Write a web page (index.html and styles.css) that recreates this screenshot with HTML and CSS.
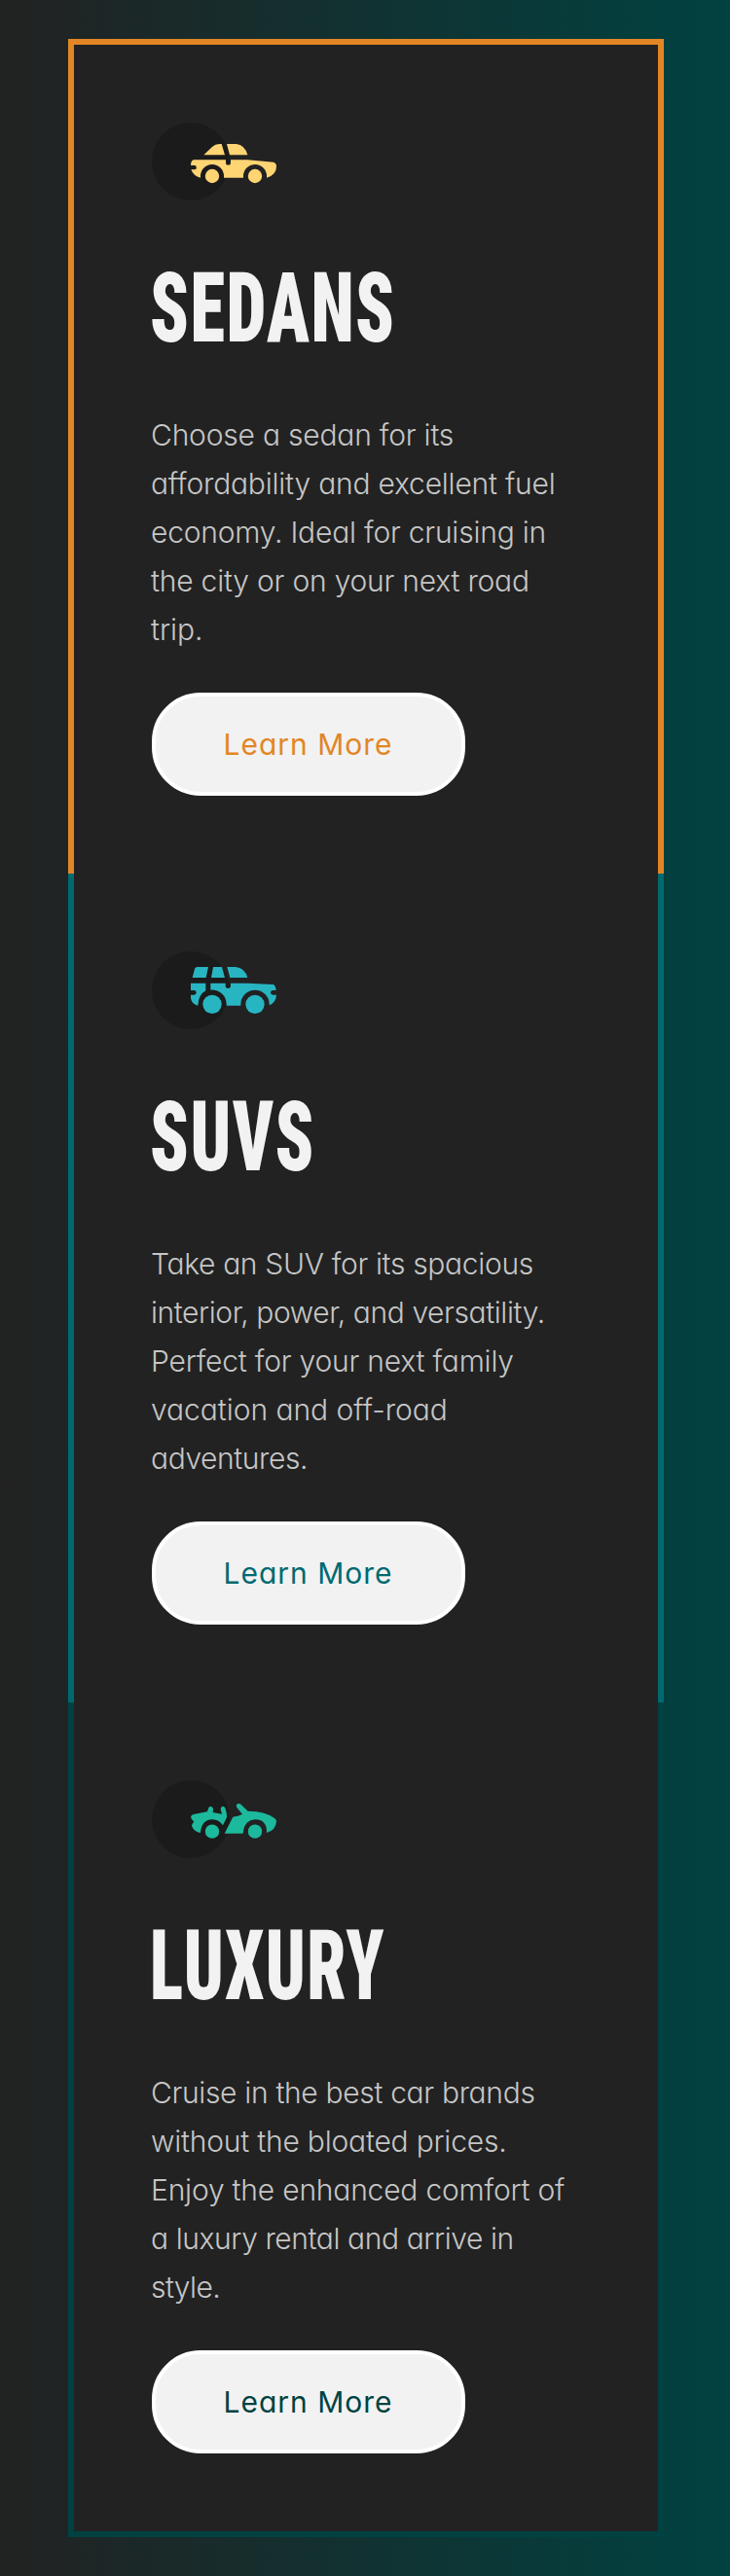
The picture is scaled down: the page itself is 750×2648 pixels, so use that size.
FILE: index.html
```
<!DOCTYPE html>
<html lang="en">
<head>
<meta charset="utf-8">
<title>Car categories</title>
<link rel="stylesheet" href="styles.css">
</head>
<body>
<main class="cards">
  <section class="card card-sedans">
    <svg class="icon" viewBox="318 318 504 240" aria-hidden="true">
      <circle class="disc" cx="438" cy="438" r="120"/>
      <path d="M478 418L504 393Q513 384 526 384H533L543 418ZM549 384H578Q605 387 613 418H558Z"/>
      <path d="M449 433H546V442a7.500 7.500 0 0 0 15 0V433H613L693 440Q702 443 702 453Q702 480 672 488V483A36 36 0 0 0 600 483V488H540V483A36 36 0 0 0 468 483V488Q446 483 439 463H449a6.500 6.500 0 0 0 0-13H438Q438 433 449 433Z"/>
      <circle cx="504" cy="483" r="21.500"/><circle cx="636" cy="483" r="21.500"/>
    </svg>
    <h2 class="title">SEDANS</h2>
    <p class="text">
      <span class="line">Choose a sedan for its</span>
      <span class="line">affordability and excellent fuel</span>
      <span class="line">economy. Ideal for cruising in</span>
      <span class="line">the city or on your next road</span>
      <span class="line loose">trip.</span>
    </p>
    <a class="button">Learn More</a>
  </section>
  <section class="card card-suvs">
    <svg class="icon" viewBox="48 54 504 240" aria-hidden="true">
      <circle class="disc" cx="168" cy="174" r="120"/>
      <path d="M188 102H222L215 135H173L180 108Q182 102 188 102ZM237 102H264L273 135H231ZM280 102H306Q335 105 343 135H289Z"/>
      <path d="M168 152H214V175Q191 188 190 221Q172 219 168 199V188H178a7 7 0 0 0 0-14H168Z"/>
      <path d="M229 152H275V160a8 8 0 0 0 16 0V152H343L422 156Q429 158 431 174H421a7 7 0 0 0 0 14H432Q431 211 410 220V217A44 44 0 0 0 322 217V221H278V217A44 44 0 0 0 229 173Z"/>
      <circle cx="234" cy="217" r="29"/><circle cx="366" cy="217" r="29"/>
    </svg>
    <h2 class="title">SUVS</h2>
    <p class="text">
      <span class="line snug">Take an SUV for its spacious</span>
      <span class="line tight">interior, power, and versatility.</span>
      <span class="line">Perfect for your next family</span>
      <span class="line loose">vacation and off-road</span>
      <span class="line tight">adventures.</span>
    </p>
    <a class="button">Learn More</a>
  </section>
  <section class="card card-luxury">
    <svg class="icon" viewBox="48 60 504 240" aria-hidden="true">
      <circle class="disc" cx="168" cy="180" r="120"/>
      <path d="M168 174Q169 167 177 165L219 157L223 145Q226 140 231 141Q238 143 237 151L236 159Q250 163 264 164L260 149Q260 141 267 140Q273 141 275 148Q279 160 279 175L267 199Q255 181 234 181Q200 183 198 222Q178 219 171 201Q171 193 178 188Q170 182 168 174Z"/>
      <path d="M298 173Q315 172 327 165L310 144Q307 139 310 134Q316 130 322 134L344 155Q400 156 426 177Q432 181 432 187Q430 215 402 222Q403 181 366 181Q332 183 329 224H272Z"/>
      <circle cx="234" cy="218" r="21.500"/><circle cx="366" cy="218" r="21.500"/>
    </svg>
    <h2 class="title">LUXURY</h2>
    <p class="text">
      <span class="line snug">Cruise in the best car brands</span>
      <span class="line">without the bloated prices.</span>
      <span class="line">Enjoy the enhanced comfort of</span>
      <span class="line tight">a luxury rental and arrive in</span>
      <span class="line flat">style.</span>
    </p>
    <a class="button">Learn More</a>
  </section>
</main>
</body>
</html>
```
FILE: styles.css
```
* { box-sizing: border-box; }

body {
  margin: 0;
  min-height: 2648px;
  padding: 40px 68px 40px 70px;
  background: linear-gradient(90deg, #222222, #004241);
  font-family: Inter, "Liberation Sans", sans-serif;
}

.card {
  display: flex;
  flex-direction: column;
  align-items: flex-start;
  height: 852px;
  padding: 80px;
  border: 0 solid var(--edge);
  border-left-width: 6px;
  border-right-width: 6px;
  background: #222222;
}

.card-sedans { --edge: #e28625; --car: #ffd473; --squeeze: 0.72; height: 858px; border-top-width: 6px; }
.card-suvs { --edge: #006970; --car: #28b5c2; --squeeze: 0.718; }
.card-luxury { --edge: #004241; --car: #1cb99d; --squeeze: 0.705; height: 858px; border-bottom-width: 6px; }

.icon {
  display: block;
  flex: none;
  width: 168px;
  height: 80px;
  fill: var(--car);
}

.disc { fill: #1b1b1b; }

.title {
  margin: 61px 0 55px -2px;
  font: 900 101px/100px Roboto, "Liberation Sans", sans-serif;
  font-stretch: 75%;
  letter-spacing: 2px;
  white-space: nowrap;
  color: #f2f2f2;
  transform: scaleX(var(--squeeze));
  transform-origin: 0 0;
}

.text {
  margin: 0 0 40px -1px;
  font-size: 30px;
  font-weight: 300;
  line-height: 50px;
  font-feature-settings: "cv11";
  color: #c6c6c6;
}

.line {
  display: block;
  letter-spacing: -0.21px;
  white-space: nowrap;
}

.snug { letter-spacing: -0.33px; }
.tight { letter-spacing: -0.41px; }
.flat { letter-spacing: -0.6px; }
.loose { letter-spacing: -0.04px; }

.button {
  display: flex;
  align-items: center;
  justify-content: center;
  flex: none;
  width: 322px;
  height: 106px;
  padding-right: 1px;
  border: 4px solid #ffffff;
  border-radius: 50px;
  background: #f2f2f2;
  font-size: 30px;
  font-weight: 400;
  letter-spacing: 1px;
  font-feature-settings: "cv11";
  color: var(--edge);
}
```
